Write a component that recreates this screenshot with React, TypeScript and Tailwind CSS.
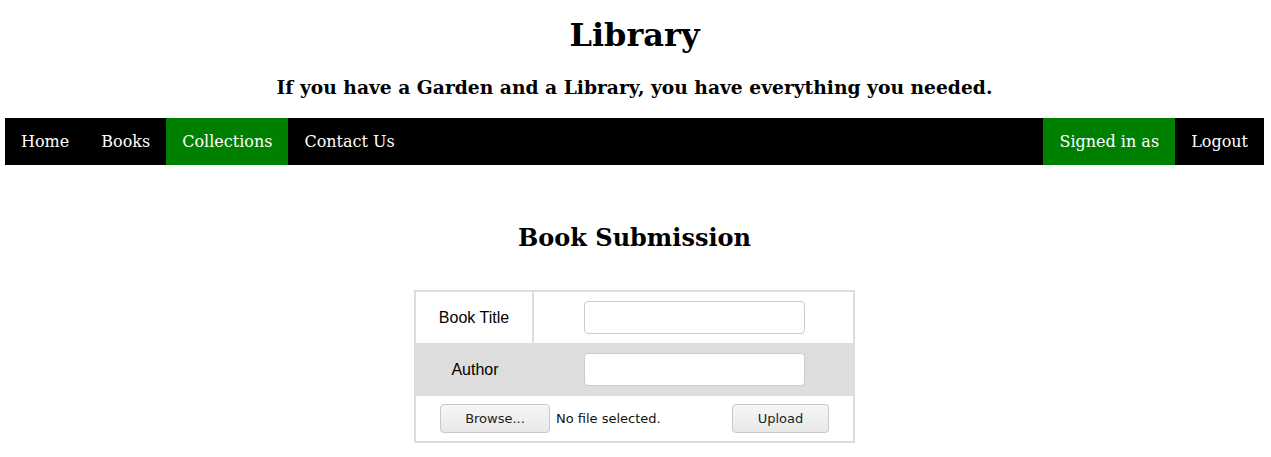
import React from 'react';

const serif = "font-['DejaVu_Serif',serif]";

function NavLink({ label, active }: { label: string; active?: boolean }) {
  return (
    <a
      href="#"
      className={
        'block px-4 py-[14px] text-[16px] leading-[19px] text-white ' +
        (active ? 'bg-[#008000]' : 'bg-black')
      }
    >
      {label}
    </a>
  );
}

export default function App() {
  return (
    <div className={`min-h-screen bg-white text-black pl-[5px] pr-[7px] ${serif}`}>
      <header className="text-center">
        <h1 className="pt-[16px] text-[32px] leading-[38px] font-bold">Library</h1>
        <h3 className="mt-[22px] text-[18.7px] leading-[22px] font-bold">
          If you have a Garden and a Library, you have everything you needed.
        </h3>
      </header>

      <nav className="mt-[20px] flex justify-between bg-black">
        <div className="flex">
          <NavLink label="Home" />
          <NavLink label="Books" />
          <NavLink label="Collections" active />
          <NavLink label="Contact Us" />
        </div>
        <div className="flex">
          <NavLink label="Signed in as" active />
          <NavLink label="Logout" />
        </div>
      </nav>

      <main className="flex flex-col items-center">
        <h2 className="mt-[59px] text-[24px] leading-[28px] font-bold">Book Submission</h2>

        <form className="mt-[38px] w-[441px] border-2 border-[#dddddd] font-['Liberation_Sans',sans-serif] text-[16px]">
          <div className="flex h-[51px] items-center">
            <div className="flex h-full w-[118px] items-center justify-center border-r-2 border-[#dddddd]">
              Book Title
            </div>
            <div className="flex flex-1 justify-center pl-[2px]">
              <input
                type="text"
                className="h-[33px] w-[221px] rounded-[4px] border border-[#cccccc] bg-white px-2"
              />
            </div>
          </div>
          <div className="flex h-[53px] items-center bg-[#dddddd]">
            <div className="flex h-full w-[118px] items-center justify-center">Author</div>
            <div className="flex flex-1 justify-center pl-[2px]">
              <input
                type="text"
                className="h-[33px] w-[221px] rounded-[4px] border border-[#cccccc] bg-white px-2"
              />
            </div>
          </div>
          <div className="flex h-[45px] items-center pl-[24px] font-['DejaVu_Sans',sans-serif] text-[13px]">
            <button
              type="button"
              className="h-[29px] w-[110px] rounded-[4px] border border-[#c8c8c8] bg-gradient-to-b from-[#f6f6f6] to-[#e9e9e9] text-[#222]"
            >
              Browse...
            </button>
            <span className="ml-[6px] text-[#111]">No file selected.</span>
            <button
              type="button"
              className="ml-auto mr-[24px] h-[29px] w-[97px] rounded-[4px] border border-[#c8c8c8] bg-gradient-to-b from-[#f6f6f6] to-[#e9e9e9] text-[#222]"
            >
              Upload
            </button>
          </div>
        </form>
      </main>
    </div>
  );
}
